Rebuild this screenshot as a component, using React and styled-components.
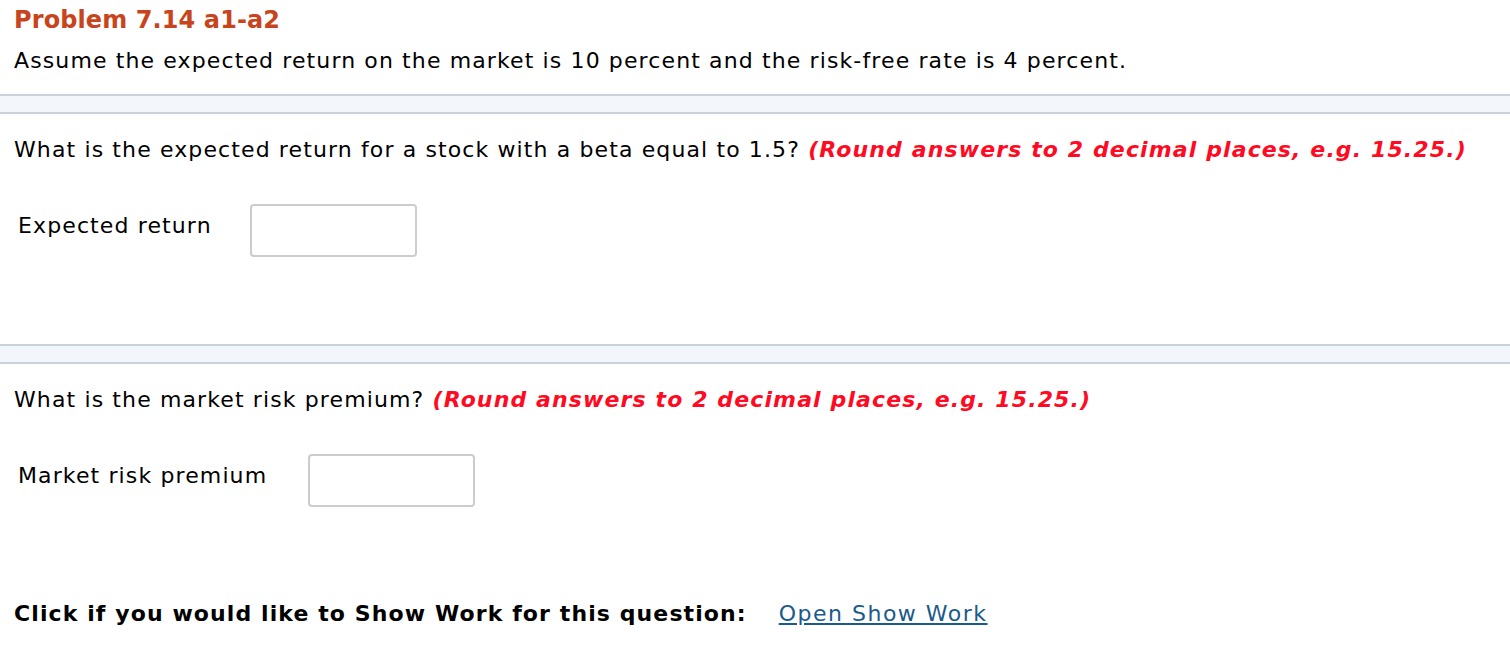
import React from 'react';
import styled, {createGlobalStyle} from 'styled-components';

const GlobalStyle = createGlobalStyle`
  html, body {
    margin: 0;
    padding: 0;
    background: #fff;
  }
  body {
    font-family: "DejaVu Sans", Verdana, sans-serif;
    color: #000;
    letter-spacing: 1.12px;
  }
`;

const Page = styled.div`
  width: 1510px;
  display: flex;
  flex-direction: column;
`;

const Header = styled.div`
  padding: 5px 14px 0;
  height: 90px;
  box-sizing: border-box;
`;

const Title = styled.div`
  font-weight: bold;
  font-size: 24px;
  line-height: 30px;
  letter-spacing: 0.1px;
  color: #c8441c;
`;

const Text = styled.div`
  font-size: 22px;
  line-height: 30px;
  margin-top: ${p => p.$top || 0}px;
`;

const Divider = styled.div`
  height: 16px;
  background: #f3f7fb;
  border-top: 2px solid #c8d2dd;
  border-bottom: 2px solid #c8d2dd;
  margin-top: 4px;
`;

const Question = styled.div`
  padding: 0 14px;
  height: ${p => p.$height}px;
  box-sizing: border-box;
`;

const Hint = styled.span`
  color: #ff0a22;
  font-weight: bold;
  font-style: italic;
`;

const FieldRow = styled.div`
  display: flex;
  align-items: center;
  margin-top: 39px;
  padding-left: 4px;
`;

const Label = styled.span`
  font-size: 22px;
  line-height: 30px;
  margin-bottom: 10px;
  width: ${p => p.$width}px;
`;

const Input = styled.input`
  width: 167px;
  height: 53px;
  box-sizing: border-box;
  border: 2px solid #cccccc;
  border-radius: 4px;
  background: #fff;
  outline: none;
`;

const Footer = styled.div`
  padding: 0 14px;
  display: flex;
  align-items: baseline;
  gap: 32px;
  font-size: 22px;
  line-height: 30px;
`;

const Prompt = styled.span`
  font-weight: bold;
  letter-spacing: 1.1px;
`;

const Link = styled.a`
  color: #1a5a8c;
  text-decoration: underline;
  letter-spacing: 1.5px;
`;

export default function App() {
  return (
    <Page>
      <GlobalStyle/>
      <Header>
        <Title>Problem 7.14 a1-a2</Title>
        <Text $top={11}>Assume the expected return on the market is 10 percent and the risk-free rate is 4 percent.</Text>
      </Header>
      <Divider/>
      <Question $height={226}>
        <Text $top={21}>
          What is the expected return for a stock with a beta equal to 1.5? <Hint>(Round answers to 2 decimal places, e.g. 15.25.)</Hint>
        </Text>
        <FieldRow>
          <Label $width={232}>Expected return</Label>
          <Input type="text"/>
        </FieldRow>
      </Question>
      <Divider/>
      <Question $height={235}>
        <Text $top={21}>
          What is the market risk premium? <Hint>(Round answers to 2 decimal places, e.g. 15.25.)</Hint>
        </Text>
        <FieldRow>
          <Label $width={290}>Market risk premium</Label>
          <Input type="text"/>
        </FieldRow>
      </Question>
      <Footer>
        <Prompt>Click if you would like to Show Work for this question:</Prompt>
        <Link href="#">Open Show Work</Link>
      </Footer>
    </Page>
  );
}
